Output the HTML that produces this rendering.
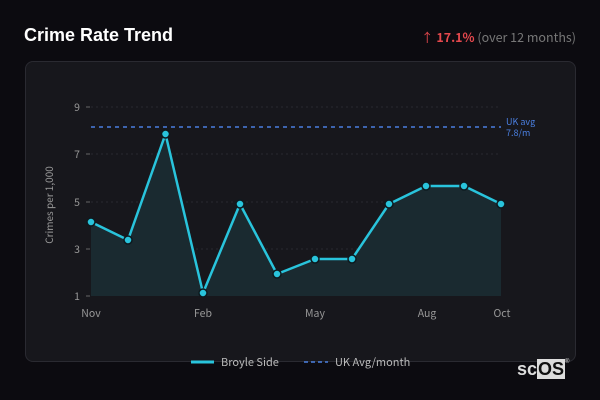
<!DOCTYPE html>
<html><head><meta charset="utf-8"><style>
body{margin:0;width:600px;height:400px;background:#0c0b10;font-family:"Noto Sans CJK JP","DejaVu Sans",sans-serif;overflow:hidden;position:relative}
.t{position:absolute;left:24px;top:25px;font:bold 18px "Liberation Sans",sans-serif;color:#fff}
.r{position:absolute;right:24px;top:27px;font-size:12.5px;color:#777}
.r b{color:#e5484d}
.card{position:absolute;left:25px;top:61px;width:549px;height:299px;background:#17171c;border:1px solid #2a2a31;border-radius:8px}
svg{position:absolute;left:0;top:0}
.logo{position:absolute;left:517px;top:359px;font:bold 18px "Liberation Sans",sans-serif;color:#ddd}
.logo span{background:#ddd;color:#111;padding:0 1px}
</style></head><body>
<div class="t">Crime Rate Trend</div>
<div class="r"><b><span style="font-weight:normal">↑</span> 17.1%</b> (over 12 months)</div>
<div class="card"></div>
<svg width="600" height="400" font-family="Noto Sans CJK JP, DejaVu Sans, sans-serif">
<g stroke="#2a2a30" stroke-dasharray="2 3" stroke-width="1">
<line x1="91" y1="107" x2="501" y2="107"/><line x1="91" y1="154" x2="501" y2="154"/><line x1="91" y1="202" x2="501" y2="202"/><line x1="91" y1="249" x2="501" y2="249"/>
</g>
<g stroke="#666"><line x1="86" y1="107" x2="90" y2="107"/><line x1="86" y1="154" x2="90" y2="154"/><line x1="86" y1="202" x2="90" y2="202"/><line x1="86" y1="249" x2="90" y2="249"/><line x1="86" y1="296" x2="90" y2="296"/></g>
<g fill="#999" font-size="10.5" text-anchor="end"><text x="80" y="111">9</text><text x="80" y="158">7</text><text x="80" y="206">5</text><text x="80" y="253">3</text><text x="80" y="300">1</text></g>
<text transform="translate(53,205) rotate(-90)" fill="#999" font-size="10" text-anchor="middle">Crimes per 1,000</text>
<g fill="#999" font-size="10.5" text-anchor="middle"><text x="91" y="317">Nov</text><text x="203" y="317">Feb</text><text x="315" y="317">May</text><text x="427" y="317">Aug</text><text x="502" y="317">Oct</text></g>
<path d="M91,222 L128,240 L165.5,134 L203,293 L240,204 L277,274 L315,259 L352,259 L389,204 L426,186 L464,186 L501,204 L501,296 L91,296Z" fill="#1a2a30"/>
<line x1="91" y1="127" x2="501" y2="127" stroke="#4a7fe0" stroke-width="1.5" stroke-dasharray="4 4"/>
<text x="506" y="125" fill="#4a7fe0" font-size="9">UK avg</text><text x="506" y="136" fill="#4a7fe0" font-size="9">7.8/m</text>
<path d="M91,222 L128,240 L165.5,134 L203,293 L240,204 L277,274 L315,259 L352,259 L389,204 L426,186 L464,186 L501,204" fill="none" stroke="#29c4dc" stroke-width="2.5" stroke-linejoin="round"/>
<g fill="#29c4dc" stroke="#0d1a1f" stroke-width="1.5">
<circle cx="91" cy="222" r="4"/><circle cx="128" cy="240" r="4"/><circle cx="165.5" cy="134" r="4"/><circle cx="203" cy="293" r="4"/><circle cx="240" cy="204" r="4"/><circle cx="277" cy="274" r="4"/><circle cx="315" cy="259" r="4"/><circle cx="352" cy="259" r="4"/><circle cx="389" cy="204" r="4"/><circle cx="426" cy="186" r="4"/><circle cx="464" cy="186" r="4"/><circle cx="501" cy="204" r="4"/>
</g>
<line x1="191" y1="362" x2="214" y2="362" stroke="#29c4dc" stroke-width="3"/>
<text x="221" y="366" fill="#bbb" font-size="11">Broyle Side</text>
<line x1="304" y1="362" x2="328" y2="362" stroke="#4a7fe0" stroke-width="1.5" stroke-dasharray="4 3"/>
<text x="335" y="366" fill="#bbb" font-size="11">UK Avg/month</text>
</svg>
<div class="logo">sc<span>OS</span><sup style="font-size:6px;font-weight:normal;vertical-align:top">®</sup></div>
</body></html>
